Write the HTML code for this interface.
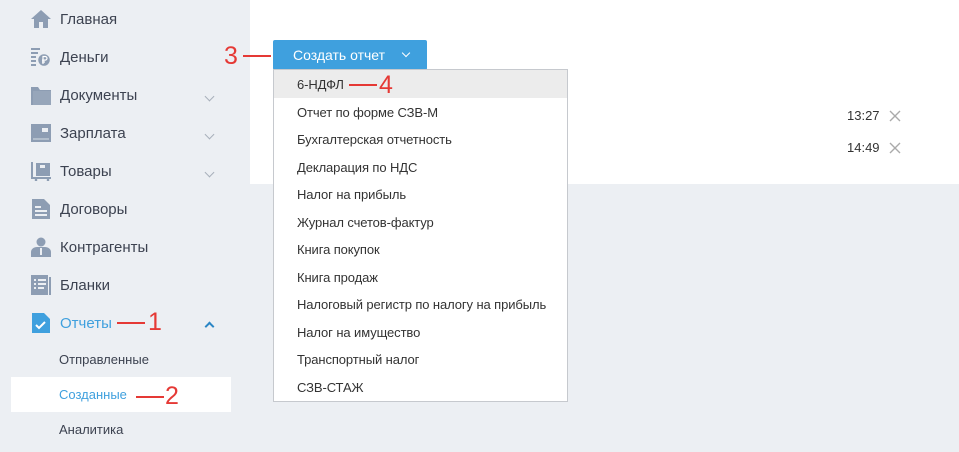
<!DOCTYPE html>
<html><head><meta charset="utf-8"><style>
*{margin:0;padding:0;box-sizing:border-box}
body{width:959px;height:452px;background:#eceff3;font-family:"Liberation Sans",Arial,sans-serif;position:relative;overflow:hidden}
.abs{position:absolute}
.nav{position:absolute;left:60px;font-size:15px;color:#3c4250;line-height:18px}
.ic{position:absolute;left:31px;width:20px;height:20px}
.chev{position:absolute;left:206px;width:7px;height:7px;border-right:1.6px solid #a8b0bb;border-bottom:1.6px solid #a8b0bb;transform:rotate(45deg)}
.sub{position:absolute;left:59px;font-size:13px;color:#3c4250;line-height:16px}
.red{position:absolute;height:2px;background:#e53935}
.num{position:absolute;color:#e53935;font-size:25px;line-height:26px}
.dd{position:absolute;left:273px;top:69px;width:295px;height:333px;background:#fff;border:1px solid #c6c9ce}
.it{position:absolute;left:23px;font-size:13px;color:#333;line-height:16px;letter-spacing:-0.1px}
</style></head><body>
<div class="abs" style="left:250px;top:0;width:709px;height:184px;background:#fff"></div>

<svg class="ic" style="top:9px" viewBox="0 0 20 20"><path d="M10 1 L20 10 H17 V19 H12 V13 H8 V19 H3 V10 H0 Z" fill="#8d9db3"/></svg>
<svg class="ic" style="top:47px" viewBox="0 0 20 20"><rect x="0" y="1" width="9" height="2" fill="#8d9db3"/><rect x="0" y="5" width="7" height="2" fill="#8d9db3"/><rect x="0" y="9" width="5" height="2" fill="#8d9db3"/><rect x="0" y="13" width="5" height="2" fill="#8d9db3"/><rect x="0" y="17" width="5" height="2" fill="#8d9db3"/><circle cx="13" cy="13" r="6.5" fill="#8d9db3" stroke="#eceff3" stroke-width="1.5"/><path d="M12 17V9.5h2.2a1.8 1.8 0 0 1 0 3.6H11M11 15h3" stroke="#fff" stroke-width="1.2" fill="none"/></svg>
<svg class="ic" style="top:85px" viewBox="0 0 20 20"><path d="M0 2 H7 L9 5 H20 V20 H0 Z" fill="#8d9db3"/><rect x="2" y="6" width="18" height="14" fill="#97a6ba"/></svg>
<svg class="ic" style="top:123px" viewBox="0 0 20 20"><rect x="0" y="1" width="20" height="18" fill="#8d9db3"/><rect x="11" y="5" width="6" height="4" fill="#eceff3"/><rect x="2" y="15" width="16" height="2" fill="#eceff3" opacity=".4"/></svg>
<svg class="ic" style="top:161px" viewBox="0 0 20 20"><path d="M0 1h2v15h18v2H0z" fill="#8d9db3"/><rect x="5" y="2" width="14" height="13" fill="#8d9db3"/><rect x="9" y="4" width="5" height="3" fill="#eceff3"/><circle cx="5" cy="19" r="1.3" fill="#8d9db3"/><circle cx="17" cy="19" r="1.3" fill="#8d9db3"/></svg>
<svg class="ic" style="top:199px" viewBox="0 0 20 20"><path d="M1 0h12l6 6v14H1z" fill="#8d9db3"/><rect x="4" y="7" width="6" height="2" fill="#eceff3"/><rect x="4" y="11" width="12" height="2" fill="#eceff3"/><rect x="4" y="15" width="12" height="2" fill="#eceff3"/></svg>
<svg class="ic" style="top:237px" viewBox="0 0 20 20"><circle cx="10" cy="5" r="4.5" fill="#8d9db3"/><path d="M0 20v-5c0-3 3-5 6-5h8c3 0 6 2 6 5v5z" fill="#8d9db3"/><path d="M9 11h2v7h-2z" fill="#eceff3"/></svg>
<svg class="ic" style="top:275px" viewBox="0 0 20 20"><rect x="0" y="0" width="17" height="20" fill="#8d9db3"/><rect x="3" y="4" width="2" height="2" fill="#eceff3"/><rect x="7" y="4" width="8" height="2" fill="#eceff3"/><rect x="3" y="8" width="2" height="2" fill="#eceff3"/><rect x="7" y="8" width="8" height="2" fill="#eceff3"/><rect x="3" y="12" width="2" height="2" fill="#eceff3"/><rect x="7" y="12" width="6" height="2" fill="#eceff3"/><rect x="18" y="2" width="2" height="18" fill="#8d9db3"/></svg>
<svg class="ic" style="top:313px" viewBox="0 0 20 20"><path d="M1 0h12l6 6v14H1z" fill="#3fa0de"/><path d="M5 12l3 3 6-6" stroke="#fff" stroke-width="2" fill="none"/></svg>

<div class="nav" style="top:11px">Главная</div>
<div class="nav" style="top:49px">Деньги</div>
<div class="nav" style="top:87px">Документы</div>
<div class="nav" style="top:125px">Зарплата</div>
<div class="nav" style="top:163px">Товары</div>
<div class="nav" style="top:201px">Договоры</div>
<div class="nav" style="top:239px">Контрагенты</div>
<div class="nav" style="top:277px">Бланки</div>
<div class="nav" style="top:315px;color:#3fa0de">Отчеты</div>
<div class="chev" style="top:93px"></div>
<div class="chev" style="top:131px"></div>
<div class="chev" style="top:169px"></div>
<div class="chev" style="top:323px;transform:rotate(225deg);border-color:#2b86c5;border-width:2px"></div>

<div class="sub" style="top:352px">Отправленные</div>
<div class="abs" style="left:11px;top:377px;width:220px;height:35px;background:#fff"></div>
<div class="sub" style="top:387px;color:#3fa0de">Созданные</div>
<div class="sub" style="top:422px">Аналитика</div>

<div class="red" style="left:117px;top:322px;width:28px"></div><div class="num" style="left:148px;top:309px">1</div>
<div class="red" style="left:136px;top:396px;width:28px"></div><div class="num" style="left:165px;top:383px">2</div>
<div class="num" style="left:224px;top:43px">3</div>
<div class="red" style="left:243px;top:55px;width:28px"></div>

<div class="abs" style="left:273px;top:40px;width:154px;height:30px;background:#3fa0de;border-radius:2px"></div>
<div class="abs" style="left:293px;top:47px;color:#fff;font-size:14px;line-height:16px">Создать отчет</div>
<div class="abs" style="left:403px;top:50px;width:6px;height:6px;border-right:1.6px solid #fff;border-bottom:1.6px solid #fff;transform:rotate(45deg)"></div>

<div class="dd">
<div class="abs" style="left:0;top:0;width:293px;height:28px;background:#ececec"></div>
<div class="it" style="top:7px">6-НДФЛ</div>
<div class="it" style="top:35px">Отчет по форме СЗВ-М</div>
<div class="it" style="top:62px">Бухгалтерская отчетность</div>
<div class="it" style="top:90px">Декларация по НДС</div>
<div class="it" style="top:117px">Налог на прибыль</div>
<div class="it" style="top:145px">Журнал счетов-фактур</div>
<div class="it" style="top:172px">Книга покупок</div>
<div class="it" style="top:200px">Книга продаж</div>
<div class="it" style="top:227px">Налоговый регистр по налогу на прибыль</div>
<div class="it" style="top:255px">Налог на имущество</div>
<div class="it" style="top:282px">Транспортный налог</div>
<div class="it" style="top:310px">СЗВ-СТАЖ</div>
</div>
<div class="red" style="left:349px;top:84px;width:28px"></div><div class="num" style="left:379px;top:72px">4</div>

<div class="abs" style="left:847px;top:108px;font-size:13px;color:#333">13:27</div>
<div class="abs" style="left:847px;top:140px;font-size:13px;color:#333">14:49</div>
<svg class="abs" style="left:889px;top:110px" width="12" height="12"><path d="M1 1L11 11M11 1L1 11" stroke="#aaa" stroke-width="1.4"/></svg>
<svg class="abs" style="left:889px;top:142px" width="12" height="12"><path d="M1 1L11 11M11 1L1 11" stroke="#aaa" stroke-width="1.4"/></svg>
</body></html>
